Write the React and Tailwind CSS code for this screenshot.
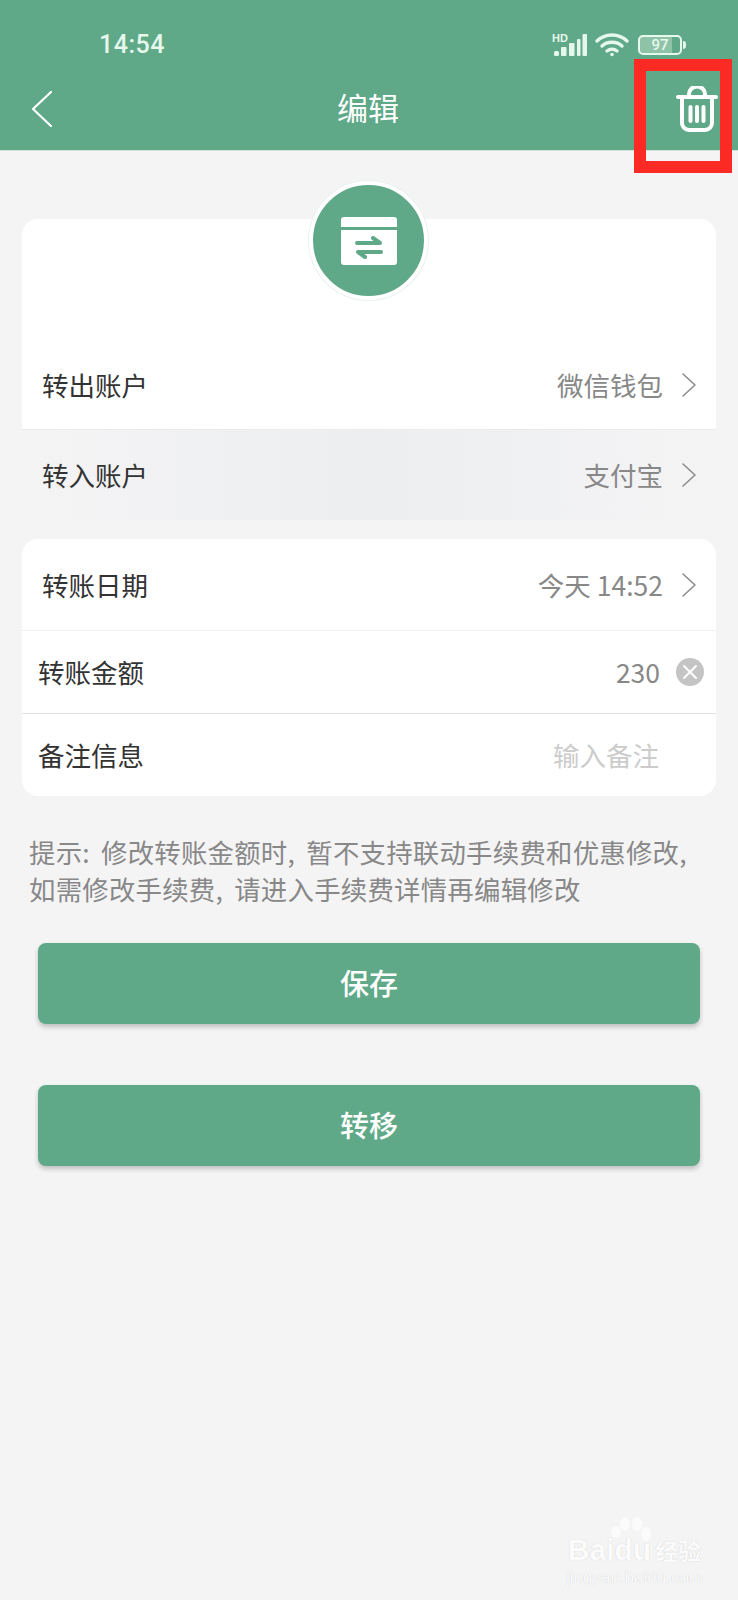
import React from "react";

const FONT = "font-['Noto_Sans_CJK_SC','Noto_Sans',sans-serif]";

const Chevron = () => (
  <svg width="16" height="26" viewBox="0 0 16 26" fill="none" className="ml-[18px] mr-[19px] shrink-0">
    <path d="M2 2l12 11L2 24" stroke="#8c8c8c" strokeWidth="1.6" strokeLinecap="round" strokeLinejoin="round" />
  </svg>
);

const Row = ({ label, value, className = "" }) => (
  <div className={`flex items-center justify-between pl-5 ${className}`}>
    <span className="text-[26.5px] text-[#333333]">{label}</span>
    <div className="flex items-center">
      <span className="text-[26.5px] text-[#888888]">{value}</span>
      <Chevron />
    </div>
  </div>
);

const StatusIcons = () => (
  <div className="flex items-center text-[#e6f7ec]">
    <svg width="36" height="24" viewBox="0 0 36 24" fill="currentColor">
      <text x="0" y="9" fontSize="11" fontWeight="700" fontFamily="Liberation Sans">HD</text>
      <rect x="2" y="18" width="5" height="5" rx="1.5" />
      <rect x="9" y="14" width="5.500" height="9" rx="1" />
      <rect x="17" y="10" width="5.500" height="13" rx="1" />
      <rect x="25" y="6" width="3.500" height="17" rx="1" />
      <rect x="30.500" y="1" width="4.500" height="22" rx="1" />
    </svg>
    <svg width="34" height="24" viewBox="0 0 34 24" fill="none" stroke="currentColor" strokeWidth="3.400" strokeLinecap="round" className="ml-[7px]">
      <path d="M2 8c8-8 22-8 30 0" />
      <path d="M7 13c5-5 15-5 20 0" />
      <path d="M12 18c3-2.500 7-2.500 10 0" />
      <circle cx="17" cy="21.500" r="1.800" fill="currentColor" stroke="none" />
    </svg>
    <div className="ml-[9px] flex items-center">
      <div className="flex h-[20px] w-[44px] items-center justify-center rounded-[5px] border-2 border-[#e6f7ec] bg-gradient-to-r from-[#8fc3a8] from-80% to-[#5fa988] to-80% text-[15px] font-medium leading-none font-['Roboto',sans-serif]">
        97
      </div>
      <div className="ml-[1px] h-[8px] w-[3px] rounded-r-sm bg-[#e6f7ec]" />
    </div>
  </div>
);

const TrashIcon = () => (
  <svg width="42" height="46" viewBox="0 0 42 46" fill="none" stroke="#ffffff" strokeWidth="4" strokeLinecap="round" strokeLinejoin="round">
    <path d="M2 11h38" />
    <path d="M13 10V8a7 6.500 0 0 1 16 0v2" />
    <path d="M6 12v25a7 7 0 0 0 7 7h16a7 7 0 0 0 7-7V12" />
    <path d="M14.500 21v14M21 21v14M27.500 21v14" />
  </svg>
);

const Baidu = () => (
  <div className="absolute left-[566px] top-[1535px] flex flex-col items-center text-[#fbfbfb] select-none [text-shadow:0_0_1px_rgba(0,0,0,0.18)]">
    <svg width="42" height="28" viewBox="0 0 42 28" fill="#fbfbfb" className="absolute left-[44px] top-[-18px]">
      <ellipse cx="6" cy="15" rx="5" ry="6" />
      <ellipse cx="15" cy="7" rx="5" ry="7" />
      <ellipse cx="27" cy="7" rx="5" ry="7" />
      <ellipse cx="36" cy="17" rx="5" ry="7" />
    </svg>
    <div className="flex items-center text-[30px] font-bold leading-none font-['Liberation_Sans',sans-serif]">
      Baidu<span className={`ml-1 text-[23px] ${FONT}`}>经验</span>
    </div>
    <div className="mt-[4px] text-[17px] leading-none font-['Liberation_Sans',sans-serif]">jingyan.baidu.com</div>
  </div>
);

export default function App() {
  return (
    <div className={`relative h-[1600px] w-[738px] overflow-hidden bg-[#f4f4f5] ${FONT}`}>
      {/* Header */}
      <header className="h-[151px] bg-[#5fa988] border-b border-[#cfe3d8]">
        <div className="flex h-[84px] items-center justify-between pl-[99px] pr-[52px] pt-[6px]">
          <span className="text-[25px] font-medium tracking-[0.5px] text-[#e6f7ec] font-['Roboto',sans-serif]">14:54</span>
          <StatusIcons />
        </div>
        <div className="flex items-center pl-[30px] pr-[20px]">
          <div className="flex-1">
            <svg width="24" height="38" viewBox="0 0 24 38" fill="none">
              <path d="M21 2L3 19l18 17" stroke="#ffffff" strokeWidth="2.200" strokeLinecap="round" strokeLinejoin="round" />
            </svg>
          </div>
          <h1 className="mb-[4px] pr-[12px] text-[31px] font-normal text-white">编辑</h1>
          <div className="flex flex-1 justify-end">
            <TrashIcon />
          </div>
        </div>
      </header>

      <main className="px-[22px]">
        {/* Account card */}
        <section className="mt-[68px] w-[694px] rounded-t-[16px] bg-white pt-[121px]">
          <Row label="转出账户" value="微信钱包" className="h-[89px]" />
          <Row
            label="转入账户"
            value="支付宝"
            className="h-[91px] border-t border-[#ebebeb] bg-gradient-to-r from-[#f4f4f5] via-[#edeef0] to-[#f4f4f5]"
          />
        </section>

        {/* Detail card */}
        <section className="mt-[19px] w-[694px] rounded-[16px] bg-white">
          <Row label="转账日期" value="今天 14:52" className="h-[91px]" />
          <div className="flex h-[83px] items-center justify-between border-t border-[#efefef] pl-[16px]">
            <span className="text-[26.5px] text-[#333333]">转账金额</span>
            <div className="flex items-center">
              <span className="text-[26.5px] text-[#888888]">230</span>
              <span className="ml-[16px] mr-[12px] flex h-[28px] w-[28px] items-center justify-center rounded-full bg-[#c4c4c4]">
                <svg width="16" height="16" viewBox="0 0 16 16" stroke="#ffffff" strokeWidth="2" strokeLinecap="round">
                  <path d="M2 2l12 12M14 2L2 14" />
                </svg>
              </span>
            </div>
          </div>
          <div className="flex h-[83px] items-center justify-between border-t border-[#dfdfdf] pl-[16px]">
            <span className="text-[26.5px] text-[#333333]">备注信息</span>
            <span className="mr-[57px] text-[26.5px] text-[#cccccc]">输入备注</span>
          </div>
        </section>

        <p className="mt-[37px] w-[690px] pl-[7px] text-[26.4px] leading-[37px] tracking-[0.25px] text-[#888888] [word-spacing:5px]">
          提示: 修改转账金额时, 暂不支持联动手续费和优惠修改,
          <br />
          如需修改手续费, 请进入手续费详情再编辑修改
        </p>

        <button className="ml-[16px] mt-[36px] flex h-[81px] w-[662px] items-center justify-center rounded-[8px] bg-[#5fa988] pb-[2px] text-[29px] font-medium text-white shadow-[0_3px_5px_rgba(0,0,0,0.22)]">
          保存
        </button>
        <button className="ml-[16px] mt-[61px] flex h-[81px] w-[662px] items-center justify-center rounded-[8px] bg-[#5fa988] pb-[2px] text-[29px] font-medium text-white shadow-[0_3px_5px_rgba(0,0,0,0.22)]">
          转移
        </button>
      </main>

      {/* Round badge over the card edge */}
      <div className="absolute left-[309px] top-[181px] flex h-[119px] w-[119px] items-center justify-center rounded-full border-[4px] border-white bg-[#5fa988] shadow-[0_0_0_1px_#e8f1ec]">
        <svg width="56" height="48" viewBox="0 0 56 48">
          <path d="M3 0h50a3 3 0 0 1 3 3v7H0V3a3 3 0 0 1 3-3zM0 13h56v32a3 3 0 0 1-3 3H3a3 3 0 0 1-3-3z" fill="#ffffff" />
          <path d="M16 26h23l-7-5M40 35H17l7 5" fill="none" stroke="#5fa988" strokeWidth="4" strokeLinecap="round" strokeLinejoin="round" />
        </svg>
      </div>

      {/* Red annotation box */}
      <div className="absolute left-[634px] top-[59px] h-[114px] w-[98px] border-[12px] border-[#fb2a24]" />

      <Baidu />
    </div>
  );
}
